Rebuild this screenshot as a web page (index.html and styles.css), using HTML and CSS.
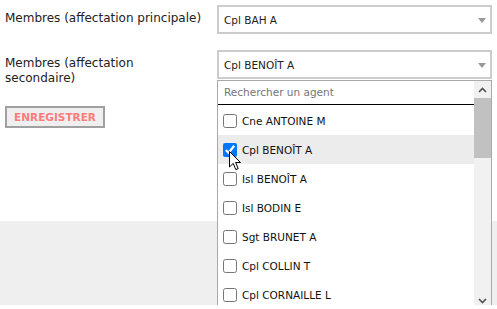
FILE: index.html
```html
<!DOCTYPE html>
<html lang="fr">
<head>
    <meta charset="UTF-8">
    <meta name="viewport" content="width=device-width, initial-scale=1.0">
    <title>Membres</title>
    <link rel="stylesheet" href="styles.css">
</head>
<body>
    <div class="form">
        <div class="row">
            <label class="label">Membres (affectation principale)</label>
            <div class="select">
                <span>Cpl BAH A</span>
                <span class="caret"></span>
            </div>
        </div>

        <div class="row row-second">
            <label class="label">Membres (affectation secondaire)</label>
            <div class="select select-open">
                <span>Cpl BENOÎT A</span>
                <span class="caret"></span>

                <div class="dropdown">
                    <div class="dropdown-list">
                        <div class="search">Rechercher un agent</div>
                        <div class="options">
                            <label class="option"><input type="checkbox"> Cne ANTOINE M</label>
                            <label class="option option-hover"><input type="checkbox" checked> Cpl BENOÎT A</label>
                            <label class="option"><input type="checkbox"> Isl BENOÎT A</label>
                            <label class="option"><input type="checkbox"> Isl BODIN E</label>
                            <label class="option"><input type="checkbox"> Sgt BRUNET A</label>
                            <label class="option"><input type="checkbox"> Cpl COLLIN T</label>
                            <label class="option"><input type="checkbox"> Cpl CORNAILLE L</label>
                        </div>
                    </div>
                    <div class="scrollbar">
                        <div class="scroll-btn">
                            <svg width="9" height="6" viewBox="0 0 9 6"><polyline points="1,5 4.5,1.5 8,5" fill="none" stroke="#505050" stroke-width="1.6"/></svg>
                        </div>
                        <div class="scroll-thumb"></div>
                        <div class="scroll-track"></div>
                        <div class="scroll-btn">
                            <svg width="9" height="6" viewBox="0 0 9 6"><polyline points="1,1 4.5,4.5 8,1" fill="none" stroke="#505050" stroke-width="1.6"/></svg>
                        </div>
                    </div>
                </div>
            </div>
        </div>

        <button class="save-button">ENREGISTRER</button>
    </div>

    <div class="footer-band"></div>

    <!-- mouse pointer over the checked option -->
    <svg class="cursor" width="13" height="20" viewBox="0 0 13 20">
        <path d="M0.5,0.5 L0.5,16 L4.2,12.4 L6.8,18.6 L9.2,17.6 L6.6,11.5 L11.5,11.5 Z" fill="#fff" stroke="#000" stroke-width="1"/>
    </svg>
</body>
</html>
```

FILE: styles.css
```css
* {
    margin: 0;
    padding: 0;
    box-sizing: border-box;
}

body {
    font-family: "DejaVu Sans", Verdana, sans-serif;
    color: #222;
    background: #fff;
}

.form {
    padding: 5px 5px 0 5px;
}

.row {
    display: flex;
    gap: 12px;
}

.row-second {
    margin-top: 16px;
}

.label {
    width: 200px;
    padding-top: 6px;
    font-size: 12px;
    line-height: 15px;
}

.select {
    flex: 1;
    height: 29px;
    border: 2px solid #ccc;
    padding: 0 4px 0 5px;
    font-size: 10.5px;
    display: flex;
    align-items: center;
    justify-content: space-between;
    background: #fff;
}

.select-open {
    position: relative;
}

.caret {
    width: 0;
    height: 0;
    border-left: 4px solid transparent;
    border-right: 4px solid transparent;
    border-top: 5px solid #999;
    margin-top: 1px;
}

.dropdown {
    position: absolute;
    top: 28px;
    left: -2px;
    right: -2px;
    height: 230px;
    border: 1px solid #a9a9a9;
    background: #fff;
    display: flex;
    z-index: 2;
}

.dropdown-list {
    flex: 1;
    overflow: hidden;
}

.search {
    height: 24px;
    line-height: 23px;
    padding-left: 6px;
    color: #757575;
    border-bottom: 1px solid #000;
}

.options {
    padding-top: 1px;
}

.option {
    height: 29px;
    display: flex;
    align-items: center;
    gap: 5px;
    padding-left: 5px;
    color: #111;
}

.option input {
    width: 14px;
    height: 14px;
    margin: 0;
}

.option-hover {
    background: #ececec;
}

.scrollbar {
    width: 17px;
    background: #f1f1f1;
    display: flex;
    flex-direction: column;
}

.scroll-btn {
    height: 17px;
    display: flex;
    align-items: center;
    justify-content: center;
}

.scroll-thumb {
    height: 60px;
    background: #c1c1c1;
}

.scroll-track {
    flex: 1;
}

.save-button {
    margin-top: 20px;
    width: 100px;
    height: 22px;
    border: 2px solid #a0a0a0;
    background: #efefef;
    color: #ff7b7b;
    font-family: "DejaVu Sans", Verdana, sans-serif;
    font-weight: bold;
    font-size: 10.5px;
}

.footer-band {
    margin-top: 93px;
    height: 84px;
    background: #efefef;
}

.cursor {
    position: absolute;
    left: 229px;
    top: 151px;
    z-index: 3;
}
```
